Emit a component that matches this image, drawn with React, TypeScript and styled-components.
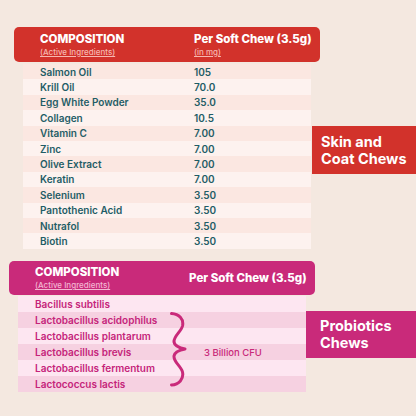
import styled, { createGlobalStyle } from "styled-components";

const GlobalStyle = createGlobalStyle`
  html, body {
    margin: 0;
    padding: 0;
    background: #f4e8e0;
  }
  body {
    font-family: Inter, "Open Sans", sans-serif;
  }
`;

const skin = [
  ["Salmon Oil", "105"],
  ["Krill Oil", "70.0"],
  ["Egg White Powder", "35.0"],
  ["Collagen", "10.5"],
  ["Vitamin C", "7.00"],
  ["Zinc", "7.00"],
  ["Olive Extract", "7.00"],
  ["Keratin", "7.00"],
  ["Selenium", "3.50"],
  ["Pantothenic Acid", "3.50"],
  ["Nutrafol", "3.50"],
  ["Biotin", "3.50"],
];

const probiotics = [
  "Bacillus subtilis",
  "Lactobacillus acidophilus",
  "Lactobacillus plantarum",
  "Lactobacillus brevis",
  "Lactobacillus fermentum",
  "Lactococcus lactis",
];

const App: React.FC = () => {
  return (
    <Page>
      <GlobalStyle />
      <Section $top={27}>
        <Column $left={14}>
          <Header $bg="#d2322b" $height={35}>
            <HeadCell>
              <Title>COMPOSITION</Title>
              <Sub $color="#f6b7b0">(Active Ingredients)</Sub>
            </HeadCell>
            <HeadCell>
              <Title>Per Soft Chew (3.5g)</Title>
              <Sub $color="#f6b7b0">(in mg)</Sub>
            </HeadCell>
          </Header>
          <SkinTable>
            {skin.map(([name, value], i) => (
              <SkinRow key={name} $odd={i % 2 === 0}>
                <Name $color="#1f5d66">{name}</Name>
                <Name $color="#1f5d66">{value}</Name>
              </SkinRow>
            ))}
          </SkinTable>
        </Column>
        <Label $bg="#d2322b" $top={99} $left={-8} $pad={9} $height={48}>
          Skin and
          <br />
          Coat Chews
        </Label>
      </Section>

      <Section $top={12}>
        <Column $left={9}>
          <Header $bg="#c92a7a" $height={34}>
            <HeadCell>
              <Title>COMPOSITION</Title>
              <Sub $color="#f4b5d2">(Active Ingredients)</Sub>
            </HeadCell>
            <HeadCell>
              <Title>Per Soft Chew (3.5g)</Title>
            </HeadCell>
          </Header>
          <ProbioTable>
            {probiotics.map((name, i) => (
              <Stripe key={name} $row={i + 1} $odd={i % 2 === 0} />
            ))}
            {probiotics.map((name, i) => (
              <ProbioName key={name} $row={i + 1}>
                {name}
              </ProbioName>
            ))}
            <Brace>
              <svg width="17" height="75" viewBox="0 0 17 75">
                <path
                  d="M1.5,1.5 C9,2 14,7 12.5,14 C11,20 3.5,24 4,30 C4.5,34 10,36 15,37 C10,38 4.5,40 4,44 C3.5,50 11,54 12.5,60 C14,67 9,72.5 1.5,73"
                  fill="none"
                  stroke="#c92a7a"
                  strokeWidth="3"
                  strokeLinecap="round"
                  strokeLinejoin="round"
                />
              </svg>
            </Brace>
            <Cfu>3 Billion CFU</Cfu>
          </ProbioTable>
        </Column>
        <Label $bg="#c92a7a" $top={50} $left={-9} $pad={14} $height={47}>
          Probiotics
          <br />
          Chews
        </Label>
      </Section>
    </Page>
  );
};

export default App;

const Page = styled.div`
  width: 416px;
  height: 416px;
  display: flex;
  flex-direction: column;
  overflow: hidden;
`;

const Section = styled.div<{ $top: number }>`
  display: flex;
  align-items: flex-start;
  margin-top: ${(p) => p.$top}px;
`;

const Column = styled.div<{ $left: number }>`
  width: 306px;
  margin-left: ${(p) => p.$left}px;
  display: flex;
  flex-direction: column;
  flex-shrink: 0;
`;

const Header = styled.div<{ $bg: string; $height: number }>`
  height: ${(p) => p.$height}px;
  background: ${(p) => p.$bg};
  border-radius: 5px;
  display: grid;
  grid-template-columns: 154px 1fr;
  padding-left: 26px;
  align-items: center;
  color: #fff;
`;

const HeadCell = styled.div`
  display: flex;
  flex-direction: column;
  gap: 1px;
`;

const Title = styled.div`
  font-size: 11.5px;
  font-weight: 800;
  line-height: 14px;
  white-space: nowrap;
`;

const Sub = styled.div<{ $color: string }>`
  font-size: 8px;
  line-height: 10px;
  font-weight: 500;
  color: ${(p) => p.$color};
  text-decoration: underline;
`;

const SkinTable = styled.div`
  margin: 2px 9px 0;
  display: flex;
  flex-direction: column;
`;

const SkinRow = styled.div<{ $odd: boolean }>`
  height: 15.4px;
  display: grid;
  grid-template-columns: 154px 1fr;
  padding-left: 17px;
  align-items: center;
  background: ${(p) => (p.$odd ? "#fbe7e1" : "#fdf2ef")};
`;

const Name = styled.div<{ $color: string }>`
  font-size: 10px;
  font-weight: 600;
  color: ${(p) => p.$color};
  white-space: nowrap;
`;

const ProbioTable = styled.div`
  margin: 1px 9px 0;
  display: grid;
  grid-template-columns: 17px 135px 34px 1fr;
  grid-template-rows: repeat(6, 16px);
`;

const Stripe = styled.div<{ $row: number; $odd: boolean }>`
  grid-row: ${(p) => p.$row};
  grid-column: 1 / -1;
  background: ${(p) => (p.$odd ? "#fde6f1" : "#f6d1e1")};
`;

const ProbioName = styled.div<{ $row: number }>`
  grid-row: ${(p) => p.$row};
  grid-column: 2;
  align-self: center;
  font-size: 10px;
  font-weight: 600;
  color: #c5247a;
  white-space: nowrap;
`;

const Brace = styled.div`
  grid-row: 2 / 7;
  grid-column: 3;
  display: flex;
  align-items: flex-start;
  svg {
    display: block;
  }
`;

const Cfu = styled.div`
  grid-row: 2 / 7;
  grid-column: 4;
  align-self: center;
  margin-top: 1px;
  font-size: 9.5px;
  font-weight: 500;
  color: #c92a7a;
`;

const Label = styled.div<{ $bg: string; $top: number; $left: number; $pad: number; $height: number }>`
  flex: 1;
  margin-top: ${(p) => p.$top}px;
  margin-left: ${(p) => p.$left}px;
  height: ${(p) => p.$height}px;
  background: ${(p) => p.$bg};
  color: #fff;
  font-size: 14.5px;
  font-weight: 700;
  line-height: 17px;
  padding-left: ${(p) => p.$pad}px;
  box-sizing: border-box;
  display: flex;
  flex-direction: column;
  justify-content: center;
  position: relative;
  z-index: 1;
`;
